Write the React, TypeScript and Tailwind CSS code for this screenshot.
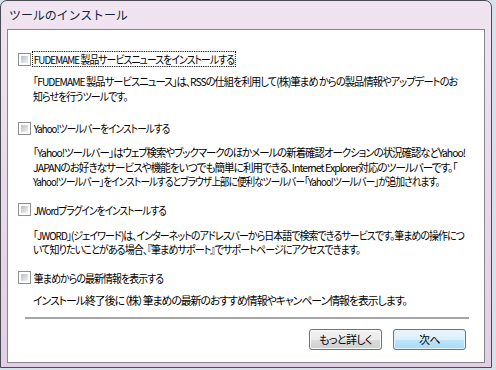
import React from "react";

const FONT = "font-['Noto_Sans_CJK_JP','Noto_Sans',sans-serif]";

function Checkbox() {
  return (
    <div className="h-[13px] w-[13px] shrink-0 border border-[#8e8f8f] bg-white p-[2px]">
      <div className="h-full w-full bg-gradient-to-br from-[#b8bdc5] to-[#f2f2f2]" />
    </div>
  );
}

type Line = { t: string; s: string };

interface SectionProps {
  label: Line;
  lines: Line[];
  focused?: boolean;
  top: string;
  descTop: string;
}

function Section({ label, lines, focused, top, descTop }: SectionProps) {
  return (
    <div className={top}>
      <div className="flex h-[16px] items-center">
        <Checkbox />
        <span
          className={`ml-[1px] inline-block origin-left whitespace-nowrap px-[1px] leading-[14px] ${label.s} ${
            focused ? "border border-dotted border-black" : "border border-transparent"
          }`}
        >
          {label.t}
        </span>
      </div>
      <div className={`${descTop} flex flex-col items-start pl-[15px] leading-[14.5px]`}>
        {lines.map((l) => (
          <span key={l.t} className={`inline-block origin-left whitespace-nowrap ${l.s}`}>
            {l.t}
          </span>
        ))}
      </div>
    </div>
  );
}

export default function App() {
  return (
    <div className={`h-[370px] w-[496px] overflow-hidden bg-[#d6e2ea] ${FONT}`}>
      <div className="flex h-[368px] w-[492px] flex-col rounded-t-[7px] border border-[#4a4a55] bg-gradient-to-b from-[#f1e4f1] to-[#e3cfe3] px-[6px] pb-[4px]">
        <div className="flex h-[28px] items-center pl-[2px] text-[12px] tracking-[-0.1px] text-[#10243c] [text-shadow:0_0_6px_#fff]">
          ツールのインストール
        </div>
        <div className="flex flex-1 flex-col border border-[#8a8490] bg-white pl-[10px] text-[11px] tracking-[-1px] text-black [font-feature-settings:'palt']">
          <Section
            top="mt-[21px]"
            descTop="mt-[7px]"
            focused
            label={{ t: "FUDEMAME 製品サービスニュースをインストールする", s: "scale-x-[0.89]" }}
            lines={[
              {
                t: "「FUDEMAME 製品サービスニュース」は、RSSの仕組を利用して(株)筆まめ からの製品情報やアップデートのお",
                s: "scale-x-[0.93]",
              },
              { t: "知らせを行うツールです。", s: "scale-x-[0.9]" },
            ]}
          />
          <Section
            top="mt-[17px]"
            descTop="mt-[9px]"
            label={{ t: "Yahoo!ツールバーをインストールする", s: "scale-x-[0.87]" }}
            lines={[
              {
                t: "「Yahoo!ツールバー」はウェブ検索やブックマークのほかメールの新着確認オークションの状況確認などYahoo!",
                s: "scale-x-[0.94]",
              },
              {
                t: "JAPANのお好きなサービスや機能をいつでも簡単に利用できる、Internet Explorer対応のツールバーです。「",
                s: "scale-x-[0.96]",
              },
              {
                t: "Yahoo!ツールバー」をインストールするとブラウザ上部に便利なツールバー「Yahoo!ツールバー」が追加されます。",
                s: "scale-x-[0.87]",
              },
            ]}
          />
          <Section
            top="mt-[13px]"
            descTop="mt-[10px]"
            label={{ t: "JWordプラグインをインストールする", s: "scale-x-[0.87]" }}
            lines={[
              {
                t: "「JWORD」(ジェイワード)は、インターネットのアドレスバーから日本語で検索できるサービスです。筆まめの操作につ",
                s: "scale-x-[0.9]",
              },
              {
                t: "いて知りたいことがある場合、『筆まめサポート』でサポートページにアクセスできます。",
                s: "scale-x-[0.91]",
              },
            ]}
          />
          <Section
            top="mt-[13px]"
            descTop="mt-[7px]"
            label={{ t: "筆まめからの最新情報を表示する", s: "scale-x-[0.9]" }}
            lines={[
              {
                t: "インストール終了後に（株）筆まめの最新のおすすめ情報やキャンペーン情報を表示します。",
                s: "scale-x-[0.985]",
              },
            ]}
          />
          <div className="ml-[7px] mr-[15px] mt-[10px] h-[2px] bg-[#a6a6a6]" />
          <div className="mr-[18px] mt-[10px] flex justify-end gap-[11px] tracking-[-0.6px]">
            <button className="h-[21px] w-[73px] rounded-[3px] border border-[#707070] bg-[linear-gradient(#f2f2f2_0%,#ebebeb_50%,#dddddd_50%,#cfcfcf_100%)] text-[11px] leading-none shadow-[inset_0_0_0_1px_#fcfcfc]">
              もっと詳しく
            </button>
            <button className="h-[21px] w-[73px] rounded-[3px] border border-[#3c7fb1] bg-[linear-gradient(#eaf6fd_0%,#d9f0fc_50%,#bee6fd_50%,#a7d9f5_100%)] text-[11px] leading-none shadow-[inset_0_0_0_1px_#e6f4fb]">
              次へ
            </button>
          </div>
        </div>
      </div>
    </div>
  );
}
